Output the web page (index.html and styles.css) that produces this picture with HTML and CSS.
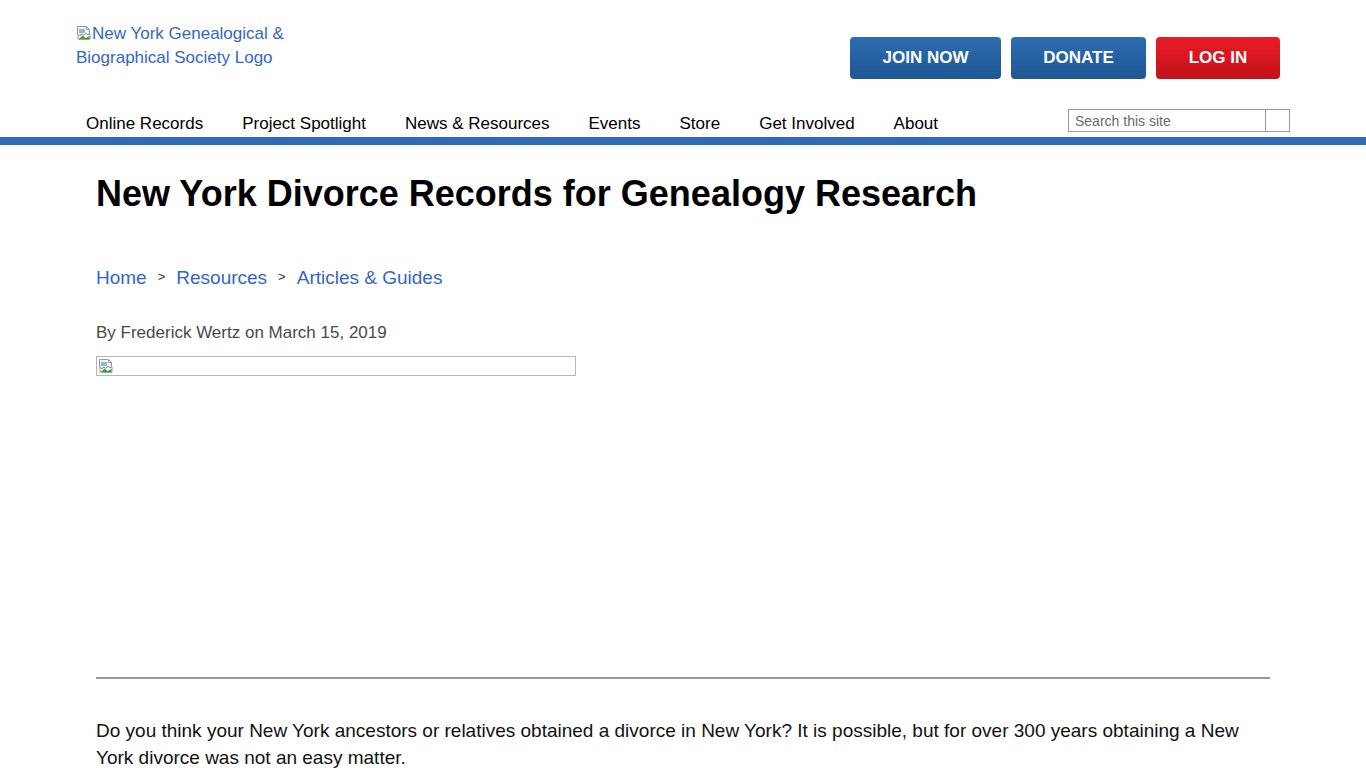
FILE: index.html
```html
<!DOCTYPE html>
<html lang="en">
<head>
<meta charset="utf-8">
<title>New York Divorce Records for Genealogy Research</title>
<link rel="stylesheet" href="styles.css">
</head>
<body>
<header class="site-header">
  <div class="header-inner">
    <div class="top-row">
      <a class="logo" href="#"><svg class="broken" width="16" height="16" viewBox="0 0 16 16"><path d="M1.5 1.5h9l3 3v4l-2 1.5-2-1.5-2 2-2-1.5-2 2-2-1.5z" fill="#f4f4f4" stroke="#9a9a9a"/><path d="M10.5 1.5v3h3" fill="none" stroke="#9a9a9a"/><path d="M2 9.5l2 1.5 2-2 2 1.5 2-2 2 1.5 2-1.5v5.5H2z" fill="#fff" stroke="#9a9a9a"/><path d="M2.5 14.5l4-4 3 2.5 4-2v3.5z" fill="#3f9b35"/><path d="M3 4h6v4H3z" fill="#8fb7e6"/></svg>New York Genealogical &amp; Biographical Society Logo</a>
      <div class="actions">
        <a class="btn btn-blue join" href="#">JOIN NOW</a>
        <a class="btn btn-blue donate" href="#">DONATE</a>
        <a class="btn btn-red login" href="#">LOG IN</a>
      </div>
    </div>
    <div class="nav-row">
      <nav class="main-nav">
        <a href="#">Online Records</a>
        <a href="#">Project Spotlight</a>
        <a href="#">News &amp; Resources</a>
        <a href="#">Events</a>
        <a href="#">Store</a>
        <a href="#">Get Involved</a>
        <a href="#">About</a>
      </nav>
      <form class="search">
        <input class="search-input" type="text" placeholder="Search this site">
        <button class="search-btn" type="button"></button>
      </form>
    </div>
  </div>
  <div class="blue-bar"></div>
</header>
<main class="content">
  <h1 class="title">New York Divorce Records for Genealogy Research</h1>
  <div class="breadcrumb">
    <a href="#">Home</a><span class="sep">&gt;</span><a href="#">Resources</a><span class="sep">&gt;</span><a href="#">Articles &amp; Guides</a>
  </div>
  <p class="byline">By Frederick Wertz on March 15, 2019</p>
  <div class="image-box"><svg class="broken" width="16" height="16" viewBox="0 0 16 16"><path d="M1.5 1.5h9l3 3v4l-2 1.5-2-1.5-2 2-2-1.5-2 2-2-1.5z" fill="#f4f4f4" stroke="#9a9a9a"/><path d="M10.5 1.5v3h3" fill="none" stroke="#9a9a9a"/><path d="M2 9.5l2 1.5 2-2 2 1.5 2-2 2 1.5 2-1.5v5.5H2z" fill="#fff" stroke="#9a9a9a"/><path d="M2.5 14.5l4-4 3 2.5 4-2v3.5z" fill="#3f9b35"/><path d="M3 4h6v4H3z" fill="#8fb7e6"/></svg></div>
  <hr class="divider">
  <p class="intro">Do you think your New York ancestors or relatives obtained a divorce in New York? It is possible, but for over 300 years obtaining a New York divorce was not an easy matter.</p>
</main>
</body>
</html>
```

FILE: styles.css
```css
* { box-sizing: border-box; }
html, body { margin: 0; padding: 0; background: #fff; }
body {
  font-family: "Liberation Sans", Arial, sans-serif;
  color: #000;
}
a { text-decoration: none; }

.header-inner {
  width: 1214px;
  margin: 0 auto;
}
.top-row {
  height: 100px;
  display: flex;
  justify-content: space-between;
  align-items: flex-start;
  padding-top: 22px;
}
.logo {
  display: block;
  width: 230px;
  font-size: 17px;
  line-height: 24px;
  color: #3566c5;
}
.broken { vertical-align: -2px; }
.actions {
  display: flex;
  gap: 10px;
  margin-top: 15px;
  margin-right: 10px;
}
.btn {
  display: block;
  height: 42px;
  line-height: 42px;
  text-align: center;
  color: #fff;
  font-weight: bold;
  font-size: 17px;
  border-radius: 4px;
}
.btn-blue { background: linear-gradient(#2c6cb1, #1f5893); }
.btn-red { background: linear-gradient(#ea1b26, #c3111a); }
.join { width: 151px; }
.donate { width: 135px; }
.login { width: 124px; }

.nav-row {
  height: 37px;
  display: flex;
  justify-content: space-between;
  align-items: flex-end;
}
.main-nav {
  display: flex;
  gap: 39px;
  padding-left: 10px;
  padding-bottom: 3px;
}
.main-nav a {
  color: #000;
  font-size: 17px;
  line-height: 20px;
}
.search {
  display: flex;
  margin: 0 0 5px 0;
}
.search-input {
  width: 198px;
  height: 23px;
  border: 1px solid #9a9a9a;
  padding: 0 6px;
  font-family: "Liberation Sans", Arial, sans-serif;
  font-size: 14px;
  color: #333;
  outline: none;
  margin: 0;
}
.search-input::placeholder { color: #6a6a6a; }
.search-btn {
  width: 24px;
  height: 23px;
  border: 1px solid #9a9a9a;
  border-left: none;
  background: #fff;
  padding: 0;
  margin: 0;
}
.blue-bar {
  height: 8px;
  background: #2e6db4;
}

.content {
  width: 1174px;
  margin: 0 auto;
  padding-top: 27px;
}
.title {
  margin: 0;
  font-size: 36px;
  line-height: 44px;
  font-weight: bold;
  color: #000;
}
.breadcrumb {
  margin-top: 47px;
  font-size: 19px;
  line-height: 27px;
}
.breadcrumb a { color: #3566c5; }
.sep {
  font-size: 13px;
  color: #333;
  padding: 0 11px;
  vertical-align: 3px;
}
.byline {
  margin: 30px 0 0;
  font-size: 17px;
  line-height: 24px;
  color: #4a4a4a;
}
.image-box {
  margin-top: 11px;
  width: 480px;
  height: 20px;
  border: 1px solid #b4b4b4;
  padding: 1px 0 0 1px;
  line-height: 0;
}
.image-box .broken { vertical-align: top; }
.divider {
  margin: 301px 0 0;
  border: 0;
  height: 2px;
  background: #999;
}
.intro {
  margin: 38px 0 0;
  font-size: 19px;
  line-height: 27px;
  color: #111;
}
```
